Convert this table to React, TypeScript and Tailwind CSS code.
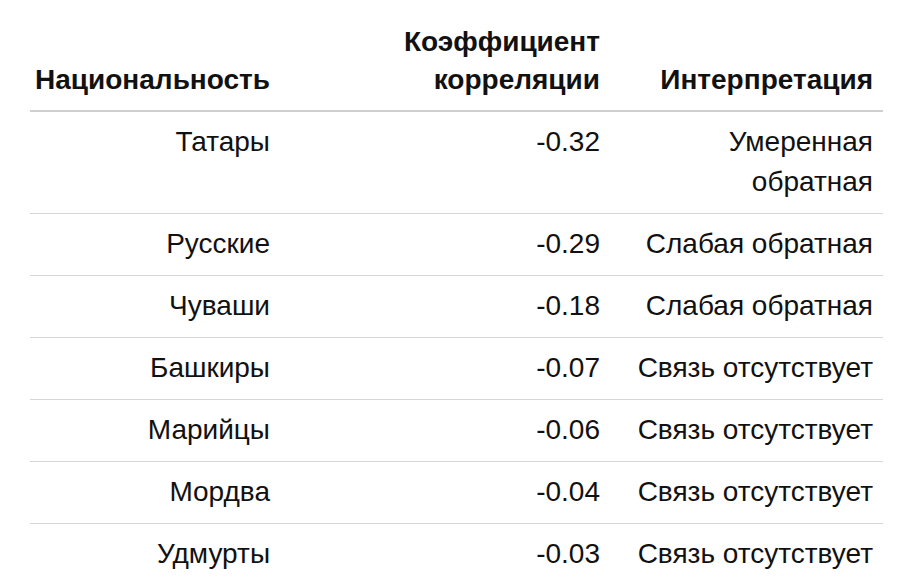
import React from "react";

type Row = { name: string; coef: string; interp: string };

const rows: Row[] = [
	{ name: "Татары", coef: "-0.32", interp: "Умеренная обратная" },
	{ name: "Русские", coef: "-0.29", interp: "Слабая обратная" },
	{ name: "Чуваши", coef: "-0.18", interp: "Слабая обратная" },
	{ name: "Башкиры", coef: "-0.07", interp: "Связь отсутствует" },
	{ name: "Марийцы", coef: "-0.06", interp: "Связь отсутствует" },
	{ name: "Мордва", coef: "-0.04", interp: "Связь отсутствует" },
	{ name: "Удмурты", coef: "-0.03", interp: "Связь отсутствует" },
];

const App = () => {
	return (
		<div className="w-[900px] h-[584px] bg-white overflow-hidden font-['Liberation_Sans',Arial,sans-serif] text-[#111]">
			<table className="ml-[30px] mt-[12px] w-[853px] border-collapse table-fixed text-[28px]">
				<colgroup>
					<col className="w-[250px]" />
					<col className="w-[330px]" />
					<col className="w-[273px]" />
				</colgroup>
				<thead>
					<tr className="border-b-2 border-[#cfcfcf]">
						<th className="pl-0 pr-[10px] pt-[11px] pb-[11px] text-right align-bottom font-bold leading-[38px]">
							Национальность
						</th>
						<th className="px-[10px] pt-[11px] pb-[11px] text-right align-bottom font-bold leading-[38px]">
							Коэффициент
							<br />
							корреляции
						</th>
						<th className="px-[10px] pt-[11px] pb-[11px] text-right align-bottom font-bold leading-[38px]">
							Интерпретация
						</th>
					</tr>
				</thead>
				<tbody>
					{rows.map((r) => (
						<tr key={r.name} className="border-b border-[#d6d6d6] last:border-b-0">
							<td className="pl-0 pr-[10px] pt-[10px] pb-[11px] text-right align-top leading-[40px]">{r.name}</td>
							<td className="px-[10px] pt-[10px] pb-[11px] text-right align-top leading-[40px]">{r.coef}</td>
							<td className="px-[10px] pt-[10px] pb-[11px] text-right align-top leading-[40px]">{r.interp}</td>
						</tr>
					))}
				</tbody>
			</table>
		</div>
	);
};

export default App;
